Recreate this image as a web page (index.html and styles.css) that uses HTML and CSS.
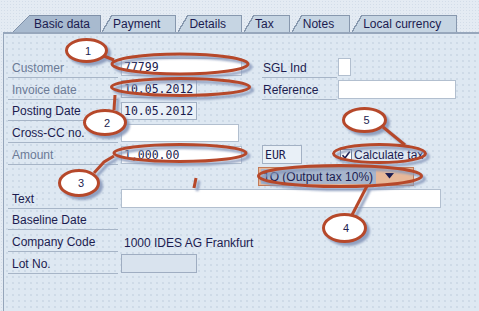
FILE: index.html
```html
<!DOCTYPE html>
<html>
<head>
<meta charset="utf-8">
<link rel="stylesheet" href="styles.css">
</head>
<body>
<div class="screen">
  <div class="tabs">
    <div class="tab active">Basic data</div>
    <div class="tab">Payment</div>
    <div class="tab">Details</div>
    <div class="tab">Tax</div>
    <div class="tab">Notes</div>
    <div class="tab">Local currency</div>
  </div>
  <div class="panel">
    <div class="form">
      <div class="lbl dim">Customer</div>
      <div class="cell"><span class="field input w121 mono">77799</span></div>
      <div class="rlbl">SGL Ind</div>
      <div class="cell"><span class="field input w13 h18"></span></div>

      <div class="lbl dim">Invoice date</div>
      <div class="cell"><span class="field display w76 mono">10.05.2012</span></div>
      <div class="rlbl">Reference</div>
      <div class="cell"><span class="field input w118 h19"></span></div>

      <div class="lbl">Posting Date</div>
      <div class="cell"><span class="field display w76 mono">10.05.2012</span></div>

      <div class="lbl">Cross-CC no.</div>
      <div class="cell"><span class="field input w118"></span></div>

      <div class="lbl dim">Amount</div>
      <div class="cell"><span class="field input w121 mono">1,000.00</span></div>
      <div class="cell c3"><span class="field display w40 h19 mono">EUR</span></div>
      <div class="cell check">
        <span class="box"><svg width="10" height="10" viewBox="0 0 10 10"><path d="M1.5 5.2 L4 8 L8.8 1.5" fill="none" stroke="#1c1c50" stroke-width="1.6"/></svg></span>
        <span class="checklbl">Calculate tax</span>
      </div>

      <div class="cell c34">
        <div class="combo">
          <span class="combotext">1O (Output tax 10%)</span>
          <span class="comboarrow"><svg width="9" height="6" viewBox="0 0 9 6"><path d="M0 0 H9 L4.5 5.5 Z" fill="#1c1c50"/></svg></span>
        </div>
      </div>

      <div class="lbl">Text</div>
      <div class="cell c234"><span class="field input w320 h19"></span></div>

      <div class="lbl">Baseline Date</div>

      <div class="lbl">Company Code</div>
      <div class="cell c234"><span class="value">1000 IDES AG Frankfurt</span></div>

      <div class="lbl">Lot No.</div>
      <div class="cell"><span class="field disabled w76 h19"></span></div>
    </div>
  </div>

  <svg class="marks" width="479" height="311" viewBox="0 0 479 311">
    <defs>
      <filter id="soft" x="-20%" y="-50%" width="140%" height="200%">
        <feGaussianBlur stdDeviation="0.8"/>
      </filter>
    </defs>
    <g class="shadow" transform="translate(3 3)" filter="url(#soft)">
      <ellipse cx="180" cy="64" rx="68" ry="10" fill="none"/>
      <ellipse cx="180.5" cy="87" rx="69" ry="8.5" fill="none"/>
      <ellipse cx="180" cy="153" rx="66" ry="8.5" fill="none"/>
      <ellipse cx="379.5" cy="153.5" rx="46" ry="9" fill="none"/>
      <ellipse cx="340" cy="176" rx="81.5" ry="10.5" fill="none"/>
      <path d="M104 56 L114 60" fill="none"/>
      <path d="M114 110 L115 95" fill="none"/>
      <path d="M94 173 L104 162 L114 156" fill="none"/>
      <path d="M383 127 L405 145" fill="none"/>
      <path d="M367 186 L352 215" fill="none"/>
      <path d="M196 178 L194 188" fill="none"/>
      <ellipse cx="86.5" cy="50.5" rx="20" ry="11"/>
      <ellipse cx="105" cy="122.5" rx="20.5" ry="12"/>
      <ellipse cx="79" cy="183" rx="19.5" ry="12.5"/>
      <ellipse cx="364.5" cy="120" rx="21" ry="11.5"/>
      <ellipse cx="344.5" cy="228" rx="21" ry="13.5"/>
    </g>
    <g class="ink">
      <ellipse cx="180" cy="64" rx="68" ry="10" fill="none"/>
      <ellipse cx="180.5" cy="87" rx="69" ry="8.5" fill="none"/>
      <ellipse cx="180" cy="153" rx="66" ry="8.5" fill="none"/>
      <ellipse cx="379.5" cy="153.5" rx="46" ry="9" fill="none"/>
      <ellipse cx="340" cy="176" rx="81.5" ry="10.5" fill="none"/>
      <path d="M104 56 L114 60" fill="none"/>
      <path d="M114 110 L115 95" fill="none"/>
      <path d="M94 173 L104 162 L114 156" fill="none"/>
      <path d="M383 127 L405 145" fill="none"/>
      <path d="M367 186 L352 215" fill="none"/>
      <path d="M196 178 L194 188" fill="none"/>
      <ellipse class="bubble" cx="86.5" cy="50.5" rx="20" ry="11"/>
      <ellipse class="bubble" cx="105" cy="122.5" rx="20.5" ry="12"/>
      <ellipse class="bubble" cx="79" cy="183" rx="19.5" ry="12.5"/>
      <ellipse class="bubble" cx="364.5" cy="120" rx="21" ry="11.5"/>
      <ellipse class="bubble" cx="344.5" cy="228" rx="21" ry="13.5"/>
    </g>
    <g class="nums">
      <text x="85" y="54.5">1</text>
      <text x="104" y="126.5">2</text>
      <text x="78" y="187">3</text>
      <text x="363.5" y="124">5</text>
      <text x="343" y="232">4</text>
    </g>
  </svg>
</div>
</body>
</html>
```

FILE: styles.css
```css
html, body {
  margin: 0;
  padding: 0;
}
body {
  width: 479px;
  height: 311px;
  overflow: hidden;
  background-color: #e4ebf3;
  background-image: radial-gradient(circle, #d3dde9 0.6px, transparent 0.9px);
  background-size: 3px 3px;
  font-family: "Liberation Sans", Arial, sans-serif;
  font-size: 12px;
  color: #1c1c50;
}
.screen {
  position: relative;
  width: 479px;
  height: 311px;
}
.tabs {
  display: flex;
  gap: 2px;
  padding: 15px 0 0 13px;
  height: 17px;
}
.tab {
  box-sizing: border-box;
  height: 17px;
  line-height: 15px;
  padding: 2px 16px 0 11px;
  white-space: nowrap;
  color: #1c1c50;
  background:
    linear-gradient(to bottom right, transparent calc(50% - 0.7px), #8798ae calc(50% - 0.7px), #8798ae calc(50% + 0.7px), #c6d5e3 calc(50% + 0.7px)) left top / 10px 100% no-repeat,
    linear-gradient(#8798ae, #8798ae) 10px 0 / calc(100% - 10px) 1px no-repeat,
    linear-gradient(#8798ae, #8798ae) right top / 1px 100% no-repeat,
    linear-gradient(#c6d5e3, #c6d5e3) 10px 0 / calc(100% - 10px) 100% no-repeat;
}
.tab.active {
  padding: 2px 11px 0 21px;
  margin-right: -1px;
  background:
    linear-gradient(to bottom right, transparent calc(50% - 0.7px), #7f90a8 calc(50% - 0.7px), #7f90a8 calc(50% + 0.7px), #a8bacf calc(50% + 0.7px)) left top / 17px 100% no-repeat,
    linear-gradient(#7f90a8, #7f90a8) 17px 0 / calc(100% - 17px) 1px no-repeat,
    linear-gradient(#7f90a8, #7f90a8) right top / 1px 100% no-repeat,
    linear-gradient(#a8bacf, #a8bacf) 17px 0 / calc(100% - 17px) 100% no-repeat;
}
.panel {
  margin-left: 3px;
  height: 278px;
  border-top: 2px solid #97a7bc;
  border-left: 1px solid #95a5ba;
  background-color: #dee8f2;
  background-image: radial-gradient(circle, #c6d3e2 0.6px, transparent 0.9px);
  background-size: 6px 6px;
}
.form {
  display: grid;
  grid-template-columns: 113px 141px 76px 1fr;
  grid-auto-rows: 21.8px;
  padding: 22px 0 0 4px;
}
.lbl {
  grid-column: 1;
  margin-right: 3px;
  padding-left: 4px;
  padding-top: 3px;
  display: flex;
  align-items: center;
  border-bottom: 1px solid #a7b5c7;
  white-space: nowrap;
}
.lbl.dim {
  color: #6b7a96;
}
.rlbl {
  grid-column: 3;
  margin-right: 1px;
  padding-left: 1px;
  padding-top: 3px;
  display: flex;
  align-items: center;
  border-bottom: 1px solid #a7b5c7;
  white-space: nowrap;
}
.cell {
  display: flex;
  align-items: center;
  padding-top: 1px;
}
.c3 { grid-column: 3; }
.c34 { grid-column: 3 / span 2; }
.c234 { grid-column: 2 / span 3; }
.field {
  box-sizing: border-box;
  height: 18px;
  line-height: 17px;
  padding-left: 2px;
  display: block;
}
.input {
  background: #ffffff;
  border: 1px solid #b2bfcf;
}
.display {
  background: #e9f0f7;
  border: 1px solid #a3b1c4;
}
.disabled {
  background: #d9e3ee;
  border: 1px solid #9fadc1;
}
.mono {
  font-family: "DejaVu Sans Mono", "Liberation Mono", monospace;
  font-size: 11.5px;
  color: #1a1a4c;
}
.h18 { height: 18px; }
.h19 { height: 19px; line-height: 18px; }
.w13 { width: 13px; }
.w40 { width: 40px; }
.w76 { width: 76px; }
.w118 { width: 118px; }
.w121 { width: 121px; }
.w320 { width: 320px; }
.check {
  gap: 2px;
  padding-left: 2px;
}
.box {
  box-sizing: border-box;
  width: 12px;
  height: 12px;
  background: #ffffff;
  border: 1px solid #6e7f9a;
  display: flex;
  align-items: center;
  justify-content: center;
}
.checklbl {
  white-space: nowrap;
  padding-top: 1px;
}
.combo {
  box-sizing: border-box;
  margin-left: -4px;
  width: 156px;
  height: 19px;
  border: 1px solid #c27a58;
  background: #e7b899;
  display: flex;
  align-items: center;
  padding: 1px 0 1px 2px;
}
.combotext {
  background: #a7b5cc;
  height: 15px;
  line-height: 16px;
  padding: 0 3px 0 2px;
  white-space: nowrap;
}
.comboarrow {
  margin-left: 9px;
  display: flex;
  align-items: center;
}
.value {
  padding-left: 3px;
  padding-top: 2px;
  white-space: nowrap;
}
.marks {
  position: absolute;
  left: 0;
  top: 0;
  pointer-events: none;
}
.shadow {
  fill: #8899bb;
  stroke: #8899bb;
  stroke-width: 3;
  opacity: 0.9;
}
.ink {
  stroke: #b6482a;
  stroke-width: 3;
}
.bubble {
  fill: #ffffff;
}
.nums text {
  font-family: "Liberation Sans", Arial, sans-serif;
  font-size: 11px;
  fill: #22224f;
}
```
